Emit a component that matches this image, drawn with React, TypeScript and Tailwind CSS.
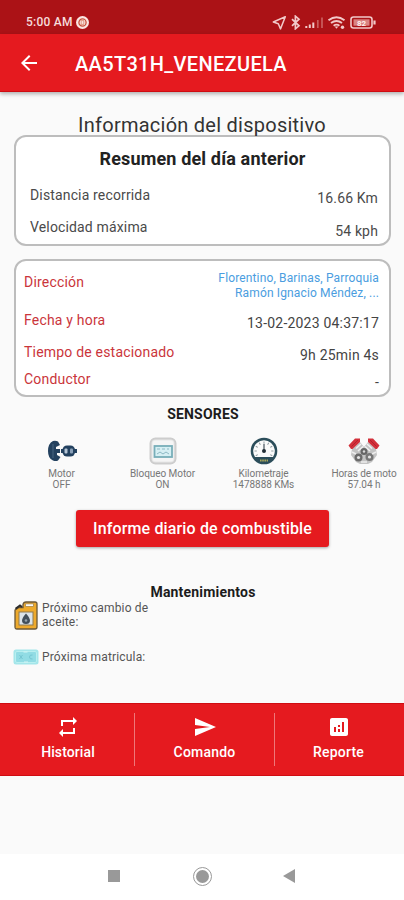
import type { ReactNode } from "react";

function StatusBar() {
  return (
    <div className="flex h-[34px] items-end justify-between bg-[#ab1216] pr-[27px] pb-[4px] pl-[26px] text-[#f6dcdc]">
      <div className="flex h-[15px] items-center gap-[3px]">
        <span className="text-[12px] leading-[15px] font-medium tracking-[0.25px]">5:00 AM</span>
        <svg width="13" height="13" viewBox="0 0 13 13">
          <circle cx="6.5" cy="6.5" r="6.5" fill="#fbe6e2" />
          <circle cx="6.5" cy="6.5" r="3.6" fill="#fbe6e2" stroke="#c8513c" strokeWidth="1.3" />
          <path d="M5 4.6h3M5 8.4h3M5.2 5v3M7.8 5v3" stroke="#d9866e" strokeWidth=".8" />
        </svg>
      </div>
      <div className="flex h-[15px] items-center">
        <svg width="105" height="15" viewBox="0 0 105 15" fill="none" stroke="#f2c9c9">
          <path d="M13.3 1.8 1.3 7l5 1.7 2.2 5.2z" strokeWidth="1.5" strokeLinejoin="round" />
          <path d="M20 4.2l7 6.6-3.6 3V1.2l3.6 3-7 6.6" strokeWidth="1.7" />
          <path d="M34.3 13v-2M37.8 13V9.500M41.300 13V7.500" strokeWidth="2" />
          <path d="M45.800 13V5M50 13V2.500" stroke="#c9605f" strokeWidth="1.700" />
          <path d="M56.500 5.300Q64.500-.8 72.500 5.300M59 8q5.500-4 11 0M61.600 10.700q3-2.200 5.800 0" strokeWidth="1.900" />
          <path d="M62.700 11.500h3.600l-1.800 2.200z" fill="#f2c9c9" stroke="none" />
          <circle cx="70.500" cy="12.300" r="1.700" fill="#f2c9c9" stroke="none" />
          <rect x="79" y="2" width="21" height="11" rx="2.500" strokeWidth="1.600" />
          <rect x="81.500" y="4.300" width="16" height="6.400" fill="#d98382" stroke="none" />
          <path d="M102.500 5.500v4" strokeWidth="2.200" />
          <text x="89.500" y="10.500" fill="#fff0ef" stroke="none" fontSize="8" fontWeight="700" textAnchor="middle">82</text>
        </svg>
      </div>
    </div>
  );
}

function AppBar() {
  return (
    <header className="relative flex h-[58px] items-center border-b border-[#cf0c12] bg-[#e51a1f] pl-[17px] text-white shadow-[0_2px_4px_rgba(0,0,0,0.3)]">
      <svg width="24" height="24" viewBox="0 0 24 24" fill="currentColor">
        <path d="M20 11H7.830l5.590-5.590L12 4l-8 8 8 8 1.410-1.410L7.830 13H20z" />
      </svg>
      <h1 className="mt-[2px] ml-[34px] text-[20px] leading-[24px] font-medium tracking-[0.33px]">AA5T31H_VENEZUELA</h1>
    </header>
  );
}

function Card({ className, children }: { className: string; children: ReactNode }) {
  return (
    <section className={`mr-[13px] ml-[14px] rounded-[12px] border-2 border-[#bdbdbd] bg-white ${className}`}>
      {children}
    </section>
  );
}

function MotorIcon() {
  return (
    <svg width="30" height="22" viewBox="0 0 30 22">
      <path d="M11 1.500Q9 .5 6 1 1 3.500 1 11t5 9.500q3 1 5 0l2.500-3.500-3.500-2V13H13V9H9V7l4-2z" fill="#23415f" />
      <path d="M6 4v14" stroke="#50708a" strokeWidth=".8" />
      <rect x="15.500" y="5.500" width="12.500" height="11" rx="4.500" fill="#23415f" />
      <path d="M14 11H30" stroke="#23415f" strokeWidth="4" />
      <rect x="17.500" y="8.500" width="3" height="5" rx="1" fill="#b6c5d6" />
      <rect x="23" y="8.500" width="3" height="5" rx="1" fill="#8aa0b8" />
    </svg>
  );
}

function LockIcon() {
  return (
    <svg width="28" height="28" viewBox="0 0 28 28">
      <rect x="1.500" y="1.500" width="25" height="25" rx="5" fill="#e7e7e7" stroke="#cdcdcd" strokeWidth="2" />
      <rect x="3.500" y="3.500" width="21" height="21" rx="3" fill="#f5f5f5" />
      <rect x="5.500" y="9" width="17.500" height="11" fill="#d6eff3" stroke="#78aeb9" strokeWidth="1.800" />
      <path d="M8 12h3m2 0h3m2 0h2M8 17l3-2 3 2 3-2 3 2" stroke="#8db9c4" fill="none" />
    </svg>
  );
}

const gaugeTicks = [0, 30, 60, 90, 120, 150, 180, 210, 240];

function GaugeIcon() {
  return (
    <svg width="28" height="28" viewBox="0 0 28 28">
      <circle cx="14" cy="14" r="13.300" fill="#2b4d5a" />
      <path d="M5 20a10.800 10.800 0 1 1 18 0z" fill="#fafafa" />
      {gaugeTicks.map((a) => (
        <path key={a} d="M14 4.500v2.300" stroke="#8a969b" strokeWidth=".9" transform={`rotate(${a - 120} 14 14)`} />
      ))}
      <path d="M14 7v7" stroke="#435059" strokeWidth="1.200" />
      <circle cx="14" cy="14" r="2" fill="#222e36" />
      <path d="M10 23.500h8" stroke="#a9a75b" strokeWidth="1.800" strokeDasharray="1.600 .6" />
    </svg>
  );
}

function EngineIcon() {
  return (
    <svg width="32" height="28" viewBox="0 0 32 28">
      <path d="M4 12l8-7 4 5 4-5 8 7 1 6-5 7-4 2h-8l-4-2-5-7z" fill="#c3c3c3" />
      <path d="M8 11.500l5-4.500M10 14l5-4.500M24 11.500 19 7M22 14l-5-4.500" stroke="#f1f1f1" strokeWidth="1.500" />
      <path d="M.5 8.500 7 1.500 12 1.500v3.500l-7.500 7H3z" fill="#d2303a" />
      <path d="M31.500 8.500 25 1.500 20 1.500v3.500l7.500 7H29z" fill="#d2303a" />
      <path d="M3.500 9.500 10 3M28.500 9.500 22 3" stroke="#b4212b" />
      <circle cx="16" cy="14.500" r="3.500" fill="#666" />
      <circle cx="10.500" cy="20.500" r="4" fill="#6b6b6b" />
      <circle cx="21.500" cy="20" r="4" fill="#777" />
      <circle cx="16" cy="14.500" r="1.200" fill="#d9d9d9" />
      <circle cx="10.500" cy="20.500" r="1.600" fill="#e4e4e4" />
      <circle cx="21.500" cy="20" r="1.600" fill="#e4e4e4" />
      <path d="M4 15l4 2M28 15l-4 2M13 25h6" stroke="#ededed" strokeWidth="1.500" />
    </svg>
  );
}

function Sensor({ icon, label, value }: { icon: ReactNode; label: string; value: ReactNode }) {
  return (
    <div className="flex flex-col items-center text-[10px] leading-[11px] tracking-[-0.05px] text-[#777] whitespace-nowrap">
      <div className="flex h-[30px] items-center">{icon}</div>
      <div className="mt-[2px]">{label}</div>
      <div>{value}</div>
    </div>
  );
}

function OilIcon() {
  return (
    <svg width="24" height="29" viewBox="0 0 24 29">
      <path d="M1 9 5 6.500h4V3.500Q9.500 1 12 1h9q2 0 2 2v23q0 2-2 2H3q-2 0-2-2z" fill="#eeaa2c" stroke="#6b5837" strokeWidth="1.300" />
      <path d="M11.500 2.800h8v2.700h-8z" fill="#fafafa" stroke="#a88544" strokeWidth=".8" />
      <path d="M1.500 7.800 6 4.500l2 1.500" stroke="#2b2b2b" strokeWidth="2" fill="none" />
      <rect x="5" y="11" width="14" height="13" fill="#dbe4ea" stroke="#8d7a52" />
      <path d="M12 12.500q4 4.500 4 7a4 3.500 0 0 1-8 0q0-2.500 4-7z" fill="#42505c" />
      <circle cx="12" cy="19.500" r="1.300" fill="#91a2ac" />
    </svg>
  );
}

function PlateIcon() {
  return (
    <svg width="26" height="16" viewBox="0 0 26 16">
      <rect x=".5" y=".5" width="25" height="15" rx="2.500" fill="#a4e6ea" />
      <rect x="2.500" y="2.500" width="21" height="11" rx="1.500" fill="#91dce4" stroke="#b9eff0" />
      <path d="M6.500 6l3 4m0-4-3 4M19.500 6q-3-.5-3 2t3 2" fill="none" stroke="#74c6d2" />
      <path d="M10.500 3h4M11 13h4" stroke="#d3f5f5" />
    </svg>
  );
}

function Tab({ className, label, path }: { className: string; label: string; path: string }) {
  return (
    <button className={`flex flex-col items-center ${className}`}>
      <svg width="24" height="24" viewBox="0 0 24 24" fill="currentColor">
        <path d={path} />
      </svg>
      <span className="mt-[4px] text-[14px] leading-[18px] font-medium">{label}</span>
    </button>
  );
}

function ActionBar() {
  return (
    <nav className="flex h-[73px] items-center border-y border-[#cf0c12] bg-[#e51a1f] pb-[3px] text-white">
      <Tab className="w-[134px] pl-[2px] tracking-[0.1px]" label="Historial" path="M7 7h10v3l4-4-4-4v3H5v6h2V7zm10 10H7v-3l-4 4 4 4v-3h12v-6h-2v4z" />
      <div className="mt-[3px] h-[53px] w-px bg-[#ef7779]" />
      <Tab className="w-[139px] tracking-[0.2px]" label="Comando" path="M2.010 21L23 12 2.010 3 2 10l15 2-15 2z" />
      <div className="mt-[3px] h-[53px] w-px bg-[#ef7779]" />
      <Tab className="flex-1 pr-[2px] tracking-[0.2px]" label="Reporte" path="M19 3H5c-1.100 0-2 .9-2 2v14c0 1.100.9 2 2 2h14c1.100 0 2-.9 2-2V5c0-1.100-.9-2-2-2zM9 17H7v-5h2v5zm4 0h-2v-3h2v3zm0-5h-2v-2h2v2zm4 5h-2V7h2v10z" />
    </nav>
  );
}

export default function App() {
  return (
    <div className="flex h-[900px] w-[404px] flex-col overflow-hidden bg-[#fafafa] font-['Roboto','Noto_Sans',sans-serif] text-[#1c1c1c]">
      <StatusBar />
      <AppBar />
      <main className="h-[611px]">
        <h2 className="h-[43px] pt-[21px] text-center text-[20px] leading-[24px] tracking-[0.25px] text-[#333]">Información del dispositivo</h2>
        <Card className="h-[111px] pr-[11px] pl-[14px] text-[14px] leading-[18px] tracking-[0.15px] text-[#4a4a4a]">
          <h3 className="mt-[11px] -ml-[3px] text-center text-[18px] leading-[22px] font-bold text-[#222]">Resumen del día anterior</h3>
          <div className="mt-[16px] flex justify-between">
            <span>Distancia recorrida</span>
            <span className="mt-[3px]">16.66 Km</span>
          </div>
          <div className="mt-[11px] flex justify-between">
            <span>Velocidad máxima</span>
            <span className="mt-[4px]">54 kph</span>
          </div>
        </Card>
        <Card className="mt-[13px] h-[138px] pt-[10px] pr-[10px] pl-[8px] text-[14px] leading-[18px] tracking-[0.2px] text-[#444]">
          <div className="flex h-[38px] justify-between">
            <span className="mt-[2px] text-[#ca353b]">Dirección</span>
            <span className="text-right text-[12px] leading-[15px] tracking-[0.14px] text-[#4a9de0]">
              Florentino, Barinas, Parroquia
              <br />
              Ramón Ignacio Méndez, ...
            </span>
          </div>
          <div className="flex h-[32px] justify-between">
            <span className="mt-[2px] text-[#ca353b]">Fecha y hora</span>
            <span className="mt-[5px]">13-02-2023 04:37:17</span>
          </div>
          <div className="flex h-[27px] justify-between">
            <span className="mt-[2px] text-[#ca353b]">Tiempo de estacionado</span>
            <span className="mt-[5px]">9h 25min 4s</span>
          </div>
          <div className="flex justify-between">
            <span className="mt-[2px] text-[#ca353b]">Conductor</span>
            <span className="mt-[5px]">-</span>
          </div>
        </Card>
        <h3 className="mt-[8px] pl-[2px] text-center text-[14px] leading-[18px] font-bold tracking-[0.2px]">SENSORES</h3>
        <div className="mt-[13px] grid w-[415px] grid-cols-[101px_101px_101px_100px] pl-[11px]">
          <Sensor icon={<MotorIcon />} label="Motor" value="OFF" />
          <Sensor icon={<LockIcon />} label="Bloqueo Motor" value="ON" />
          <Sensor icon={<GaugeIcon />} label="Kilometraje" value="1478888 KMs" />
          <Sensor icon={<EngineIcon />} label="Horas de moto" value="57.04 h" />
        </div>
        <button className="mt-[20px] ml-[76px] block h-[37px] w-[253px] rounded-[3px] bg-[#e51a1f] text-center text-[16px] leading-[36px] font-medium tracking-[0.14px] text-white shadow-[0_1px_3px_rgba(0,0,0,0.35)]">
          Informe diario de combustible
        </button>
        <h3 className="mt-[36px] pl-[2px] text-center text-[14px] leading-[18px] font-bold tracking-[0.2px]">Mantenimientos</h3>
        <div className="ml-[14px] flex gap-[4px] text-[12px] leading-[14px] tracking-[0.17px] text-[#555]">
          <OilIcon />
          <p className="w-[120px]">
            Próximo cambio de
            <br />
            aceite:
          </p>
        </div>
        <div className="mt-[19px] ml-[13px] flex items-center gap-[3px] text-[12px] leading-[14px] tracking-[0.17px] text-[#555]">
          <PlateIcon />
          <p>Próxima matricula:</p>
        </div>
      </main>
      <ActionBar />
      <div className="h-[78px]" />
      <div className="flex h-[46px] items-center bg-white pb-[2px] pl-[108px]">
        <div className="h-[12px] w-[12px] bg-[#999]" />
        <div className="ml-[73px] flex h-[19px] w-[19px] items-center justify-center rounded-full border border-[#999]">
          <div className="h-[13px] w-[13px] rounded-full bg-[#999]" />
        </div>
        <svg className="ml-[71px]" width="13" height="14" viewBox="0 0 13 14">
          <path d="M0 7 12 0v14z" fill="#999" />
        </svg>
      </div>
    </div>
  );
}
